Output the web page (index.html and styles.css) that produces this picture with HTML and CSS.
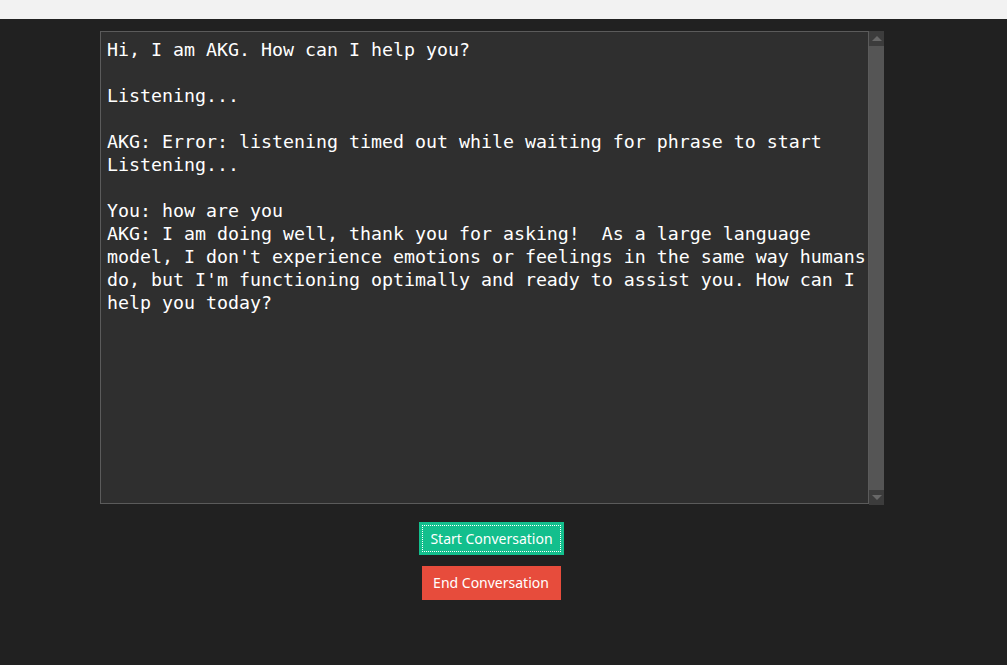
FILE: index.html
```html
<!DOCTYPE html>
<html>
<head>
<meta charset="utf-8">
<link rel="stylesheet" href="styles.css">
</head>
<body>
<div class="titlebar"></div>
<main class="app">
  <div class="chat">
    <div class="log">Hi, I am AKG. How can I help you?

Listening...

AKG: Error: listening timed out while waiting for phrase to start
Listening...

You: how are you
AKG: I am doing well, thank you for asking!  As a large language
model, I don't experience emotions or feelings in the same way humans
do, but I'm functioning optimally and ready to assist you. How can I
help you today?</div>
    <div class="scrollbar">
      <div class="arrow up"></div>
      <div class="track"></div>
      <div class="arrow down"></div>
    </div>
  </div>
  <div class="buttons">
    <button class="btn start">Start Conversation</button>
    <button class="btn end">End Conversation</button>
  </div>
</main>
</body>
</html>
```
FILE: styles.css
```css
html, body {
  margin: 0;
  padding: 0;
  height: 100%;
}
body {
  background: #212121;
  overflow: hidden;
}
.titlebar {
  height: 19px;
  background: #f2f2f2;
}
.app {
  width: 784px;
  margin-left: 100px;
  padding-top: 12px;
  display: flex;
  flex-direction: column;
}
.chat {
  display: flex;
  height: 474px;
}
.log {
  box-sizing: border-box;
  width: 769px;
  height: 473px;
  border: 1px solid #5b5b5b;
  background: #2f2f2f;
  color: #ffffff;
  font-family: "DejaVu Sans Mono", "Liberation Mono", monospace;
  font-size: 18.27px;
  line-height: 23px;
  white-space: pre;
  padding: 6px 0 0 6px;
  overflow: hidden;
}
.scrollbar {
  width: 15px;
  height: 474px;
  display: flex;
  flex-direction: column;
  background: #555555;
}
.arrow {
  height: 15px;
  background: #3c3c3c;
  display: flex;
  align-items: center;
  justify-content: center;
}
.arrow::after {
  content: "";
  width: 0;
  height: 0;
  border-left: 5px solid transparent;
  border-right: 5px solid transparent;
}
.arrow.up::after {
  border-bottom: 5px solid #686868;
}
.arrow.down::after {
  border-top: 5px solid #686868;
}
.track {
  flex: 1;
  background: #555555;
}
.buttons {
  display: flex;
  flex-direction: column;
  align-items: center;
  padding-top: 17px;
  gap: 11px;
}
.btn {
  border: none;
  color: #ffffff;
  font-family: "Noto Sans", "Open Sans", sans-serif;
  font-size: 14px;
  line-height: 20px;
  padding: 0;
  margin: 0 0 0 -1px;
  cursor: pointer;
}
.btn.start {
  width: 145px;
  height: 33px;
  background: #13bf8d;
  outline: 1px dotted #ffffff;
  outline-offset: -4px;
}
.btn.end {
  width: 139px;
  height: 34px;
  background: #e74c3c;
  margin-left: -2px;
}
```
